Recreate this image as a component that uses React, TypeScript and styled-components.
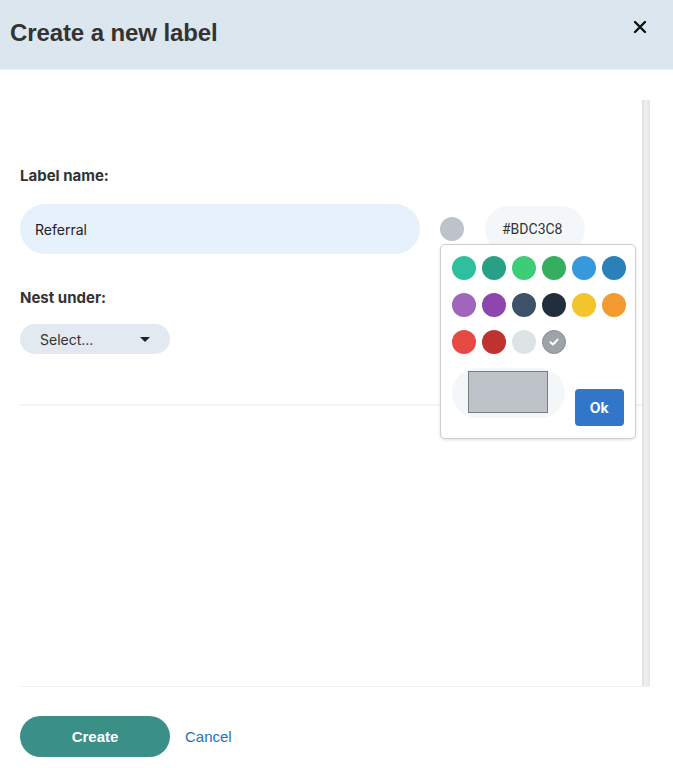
import styled, { createGlobalStyle } from "styled-components";

const GlobalStyle = createGlobalStyle`
    html, body {
        margin: 0;
        padding: 0;
        background: #ffffff;
    }
    body {
        font-family: Inter, "Liberation Sans", Arial, sans-serif;
        color: #333;
    }
    * {
        box-sizing: border-box;
    }
`;

const Dialog = styled.div`
    width: 673px;
    height: 768px;
    display: flex;
    flex-direction: column;
    background: #fff;
    overflow: hidden;
`;

const Header = styled.header`
    height: 70px;
    flex: none;
    display: flex;
    align-items: center;
    justify-content: space-between;
    padding: 0 26px 3px 10px;
    background: #dbe6ee;
    border-bottom: 1px solid #e9f0f4;
`;

const Title = styled.h1`
    margin: 0;
    font-family: "Liberation Sans", Arial, sans-serif;
    font-size: 24px;
    font-weight: 700;
    color: #333;
    letter-spacing: -0.1px;
`;

const CloseButton = styled.button`
    border: none;
    background: none;
    padding: 0;
    width: 14px;
    height: 14px;
    display: flex;
    margin-top: -13px;
    cursor: pointer;
`;

const Main = styled.div`
    flex: 1;
    display: flex;
    flex-direction: column;
    padding: 30px 23px 0 20px;
`;

const ScrollArea = styled.div`
    height: 587px;
    display: flex;
    border-bottom: 1px solid #eef2f5;
`;

const Content = styled.div`
    flex: 1;
    padding-top: 67px;
    display: flex;
    flex-direction: column;
`;

const Track = styled.div`
    width: 8px;
    flex: none;
    background: linear-gradient(to right, #dedede, #f0f0f0 45%, #e4e4e4);
`;

const FieldLabel = styled.label<{ $top?: number }>`
    display: block;
    font-size: 15px;
    line-height: 18px;
    font-weight: 700;
    color: #333;
    margin-top: ${(p) => p.$top ?? 0}px;
`;

const NameRow = styled.div`
    margin-top: 19px;
    height: 50px;
    display: flex;
    align-items: center;
`;

const NameInput = styled.div`
    width: 400px;
    height: 50px;
    border-radius: 25px;
    background: #e7f1fc;
    display: flex;
    align-items: center;
    padding-left: 15px;
    font-size: 14px;
    color: #222;
`;

const ColorArea = styled.div`
    position: relative;
    display: flex;
    align-items: center;
    margin-left: 20px;
`;

const ColorDot = styled.span`
    width: 24px;
    height: 24px;
    border-radius: 50%;
    background: #bdc3c8;
`;

const HexPill = styled.div`
    margin-left: 21px;
    width: 100px;
    height: 47px;
    border-radius: 24px;
    background: #f3f7fa;
    display: flex;
    align-items: center;
    padding-left: 17px;
    font-family: Roboto, "Liberation Sans", sans-serif;
    font-size: 14px;
    color: #333;
`;

const Popup = styled.div`
    position: absolute;
    left: 0;
    top: 38px;
    z-index: 2;
    width: 196px;
    padding: 11px 11px 12px 11px;
    background: #fff;
    border: 1px solid #cfcfcf;
    border-radius: 5px;
    box-shadow: 0 1px 3px rgba(0, 0, 0, 0.12);
`;

const SwatchGrid = styled.div`
    display: grid;
    grid-template-columns: repeat(6, 24px);
    column-gap: 6px;
    row-gap: 13px;
`;

const Swatch = styled.span<{ $color: string; $selected?: boolean }>`
    width: 24px;
    height: 24px;
    border-radius: 50%;
    background: ${(p) => p.$color};
    display: flex;
    align-items: center;
    justify-content: center;
    border: ${(p) => (p.$selected ? "1px solid #8a8f94" : "none")};
`;

const CustomRow = styled.div`
    margin-top: 14px;
    display: flex;
    align-items: flex-start;
    gap: 10px;
`;

const PreviewPill = styled.div`
    width: 114px;
    height: 50px;
    border-radius: 25px;
    background: #f3f7fa;
    display: flex;
    justify-content: center;
    padding-top: 3px;
`;

const PreviewBox = styled.div`
    width: 80px;
    height: 42px;
    background: #bdc3c8;
    border: 1px solid #767b80;
`;

const OkButton = styled.button`
    margin-top: 21px;
    width: 50px;
    height: 37px;
    border: none;
    border-radius: 4px;
    background: #3176c8;
    color: #fff;
    font-family: Inter, "Liberation Sans", sans-serif;
    font-size: 14px;
    font-weight: 700;
    cursor: pointer;
`;

const SelectBox = styled.div`
    margin-top: 17px;
    width: 150px;
    height: 30px;
    border-radius: 15px;
    background: #e2e9f0;
    display: flex;
    align-items: center;
    justify-content: space-between;
    padding: 0 20px 0 20px;
    font-size: 14px;
    color: #333;
`;

const Caret = styled.span`
    width: 0;
    height: 0;
    border-left: 5px solid transparent;
    border-right: 5px solid transparent;
    border-top: 5px solid #222;
`;

const Divider = styled.hr`
    margin: 50px 0 0 0;
    border: none;
    border-top: 2px solid #f1f5f8;
`;

const Footer = styled.footer`
    display: flex;
    align-items: center;
    gap: 15px;
    padding-top: 29px;
`;

const CreateButton = styled.button`
    width: 150px;
    height: 41px;
    border: none;
    border-radius: 21px;
    background: #3a8f86;
    color: #fff;
    font-family: "Liberation Sans", Arial, sans-serif;
    font-size: 15px;
    font-weight: 700;
    cursor: pointer;
`;

const CancelLink = styled.a`
    font-family: "Liberation Sans", Arial, sans-serif;
    font-size: 15px;
    color: #1b75bb;
    text-decoration: none;
    cursor: pointer;
`;

const swatches = [
    "#2ebf9f", "#27a086", "#3dcc77", "#36ae60", "#3599dc", "#2a80b9",
    "#a066bd", "#8e45ad", "#3d5268", "#212f3d", "#f4c42f", "#f39a30",
    "#e74a43", "#be322f", "#dde4e6", "#9ea3a8",
];

export default function App() {
    const selected = "#9ea3a8";

    return (
        <>
            <GlobalStyle />
            <Dialog>
                <Header>
                    <Title>Create a new label</Title>
                    <CloseButton aria-label="Close">
                        <svg width="14" height="14" viewBox="0 0 14 14">
                            <path d="M2 2 L12 12 M12 2 L2 12" stroke="#111" strokeWidth="2.4" strokeLinecap="round" />
                        </svg>
                    </CloseButton>
                </Header>
                <Main>
                    <ScrollArea>
                        <Content>
                            <FieldLabel>Label name:</FieldLabel>
                            <NameRow>
                                <NameInput>Referral</NameInput>
                                <ColorArea>
                                    <ColorDot />
                                    <HexPill>#BDC3C8</HexPill>
                                    <Popup>
                                        <SwatchGrid>
                                            {swatches.map((c) => (
                                                <Swatch key={c} $color={c} $selected={c === selected}>
                                                    {c === selected && (
                                                        <svg width="12" height="12" viewBox="0 0 12 12">
                                                            <path d="M2.5 6.3 L5 8.6 L9.5 3.6" fill="none" stroke="#fff" strokeWidth="2" strokeLinecap="round" strokeLinejoin="round" />
                                                        </svg>
                                                    )}
                                                </Swatch>
                                            ))}
                                        </SwatchGrid>
                                        <CustomRow>
                                            <PreviewPill>
                                                <PreviewBox />
                                            </PreviewPill>
                                            <OkButton>Ok</OkButton>
                                        </CustomRow>
                                    </Popup>
                                </ColorArea>
                            </NameRow>
                            <FieldLabel $top={35}>Nest under:</FieldLabel>
                            <SelectBox>
                                <span>Select...</span>
                                <Caret />
                            </SelectBox>
                            <Divider />
                        </Content>
                        <Track />
                    </ScrollArea>
                    <Footer>
                        <CreateButton>Create</CreateButton>
                        <CancelLink>Cancel</CancelLink>
                    </Footer>
                </Main>
            </Dialog>
        </>
    );
}
